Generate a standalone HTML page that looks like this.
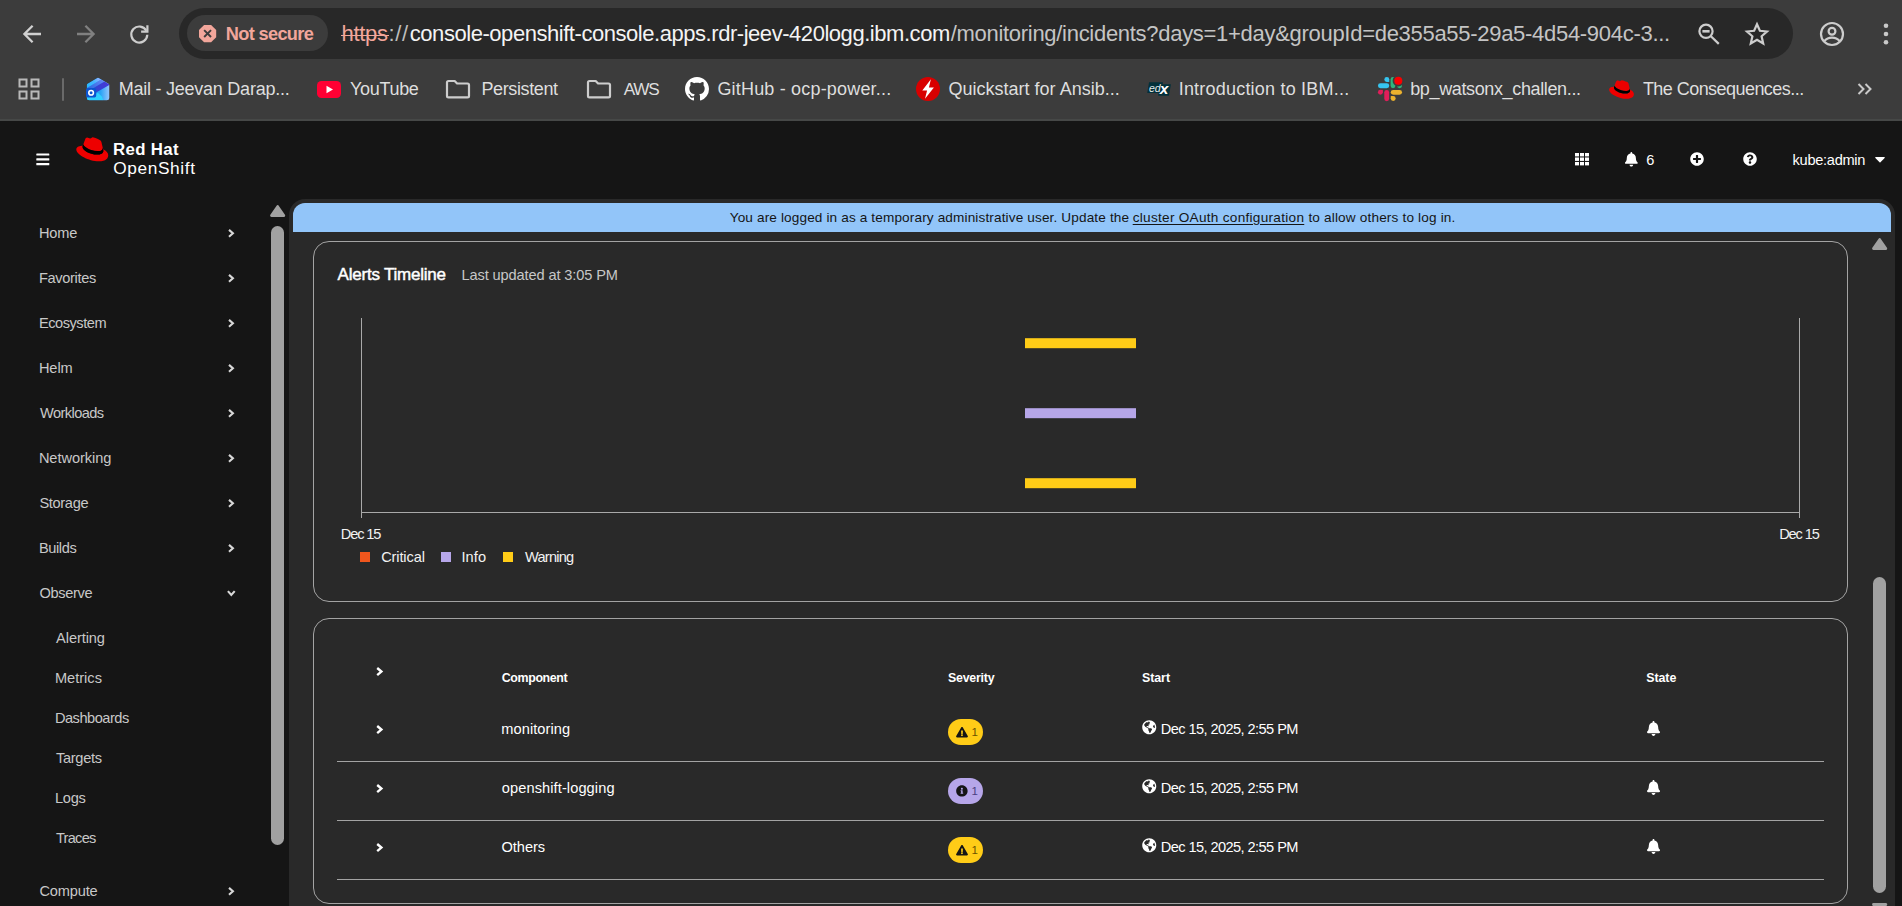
<!DOCTYPE html>
<html lang="en">
<head>
<meta charset="utf-8">
<title>Incidents · Red Hat OpenShift</title>
<style>
*{box-sizing:border-box;margin:0;padding:0}
html,body{width:1902px;height:906px;overflow:hidden;background:#151515}
body{position:relative;font-family:"Liberation Sans",sans-serif;color:#fff;-webkit-font-smoothing:antialiased}
.a{position:absolute}
.t{position:absolute;white-space:nowrap;line-height:1}
svg{position:absolute;overflow:visible}
/* chrome */
#chrome{left:0;top:0;width:1902px;height:121px;background:#3c3c3c;border-bottom:2px solid #464847}
#omni{left:179px;top:8px;width:1613.500px;height:51px;border-radius:25.500px;background:#282828}
#chip{left:186.800px;top:15px;width:141.700px;height:36px;border-radius:18px;background:#3c3c3c}
.bm{font-size:18px;color:#dedede;top:80px}
/* app */
#side{left:0;top:121px;width:1902px;height:785px;background:#151515}
#main{left:289px;top:199px;width:1606px;height:707px;background:#292929;border-radius:16px 16px 0 0}
#banner{left:4px;top:4px;width:1598px;height:29px;background:#92c5f9;border-radius:12px 12px 0 0}
.card{border:1px solid #a3a3a3;border-radius:16px}
.nav{font-size:14.6px;color:#c8c8c8;left:39px}
.sub{font-size:14.6px;color:#c8c8c8;left:55px}
.hr{left:337px;width:1487px;height:1px;background:#a3a3a3}
.th{font-size:12.4px;font-weight:bold;color:#fff;top:671px}
.td{font-size:14.6px;color:#fff}
/*FIT-START*/
#ns{letter-spacing:-0.661px!important;left:225.8px!important;top:24.6px!important}
#u1{letter-spacing:-0.325px!important;left:341.5px!important;top:22.6px!important}
#u2{letter-spacing:0.675px!important;left:388.4px!important;top:22.6px!important}
#u3{letter-spacing:-0.454px!important;left:409.8px!important;top:22.6px!important}
#u4{letter-spacing:-0.293px!important;left:950.7px!important;top:22.6px!important}
#b1{letter-spacing:-0.248px!important;left:118.8px!important;top:79.9px!important}
#b2{letter-spacing:-0.333px!important;left:350.1px!important;top:79.9px!important}
#b3{letter-spacing:-0.389px!important;left:481.5px!important;top:79.9px!important}
#b4{letter-spacing:-1.225px!important;left:623.7px!important;top:80.6px!important}
#b5{letter-spacing:0.185px!important;left:717.4px!important;top:79.9px!important}
#b6{letter-spacing:0.007px!important;left:948.5px!important;top:79.9px!important}
#b7{letter-spacing:0.210px!important;left:1178.7px!important;top:79.9px!important}
#b8{letter-spacing:-0.363px!important;left:1410.2px!important;top:79.9px!important}
#b9{letter-spacing:-0.547px!important;left:1642.9px!important;top:79.9px!important}
#rh1{letter-spacing:0.392px!important;left:112.9px!important;top:141.6px!important}
#rh2{letter-spacing:0.612px!important;left:113.2px!important;top:160.4px!important}
#m6{letter-spacing:0.000px!important;left:1646.2px!important;top:152.9px!important}
#ka{letter-spacing:-0.289px!important;left:1792.6px!important;top:152.9px!important}
#n1{letter-spacing:-0.167px!important;left:38.9px!important;top:225.8px!important}
#n2{letter-spacing:-0.331px!important;left:38.9px!important;top:270.8px!important}
#n3{letter-spacing:-0.456px!important;left:38.9px!important;top:315.8px!important}
#n4{letter-spacing:-0.083px!important;left:38.9px!important;top:360.8px!important}
#n5{letter-spacing:-0.581px!important;left:40.1px!important;top:405.8px!important}
#n6{letter-spacing:-0.061px!important;left:38.9px!important;top:450.8px!important}
#n7{letter-spacing:-0.325px!important;left:39.4px!important;top:495.8px!important}
#n8{letter-spacing:-0.380px!important;left:38.9px!important;top:540.8px!important}
#n9{letter-spacing:-0.308px!important;left:39.4px!important;top:585.8px!important}
#n10{letter-spacing:-0.086px!important;left:56.1px!important;top:631.0px!important}
#n11{letter-spacing:0.008px!important;left:54.9px!important;top:671.0px!important}
#n12{letter-spacing:-0.489px!important;left:54.9px!important;top:711.0px!important}
#n13{letter-spacing:-0.283px!important;left:55.9px!important;top:751.0px!important}
#n14{letter-spacing:-0.267px!important;left:55.0px!important;top:791.0px!important}
#n15{letter-spacing:-0.750px!important;left:56.0px!important;top:831.0px!important}
#n16{letter-spacing:-0.158px!important;left:39.4px!important;top:884.1px!important}
#bn1{letter-spacing:0.134px!important;left:729.7px!important;top:210.9px!important}
#bn2{letter-spacing:0.281px!important;left:1132.7px!important;top:210.9px!important}
#bn3{letter-spacing:0.166px!important;left:1308.4px!important;top:210.9px!important}
#at{letter-spacing:-0.218px!important;left:337.6px!important;top:266.1px!important}
#lu{letter-spacing:-0.118px!important;left:461.5px!important;top:267.7px!important}
#d1{letter-spacing:-1.140px!important;left:340.8px!important;top:526.9px!important}
#d2{letter-spacing:-1.120px!important;left:1779.2px!important;top:526.9px!important}
#l1{letter-spacing:-0.129px!important;left:381.2px!important;top:550.0px!important}
#l2{letter-spacing:0.067px!important;left:461.5px!important;top:550.0px!important}
#l3{letter-spacing:-0.767px!important;left:525.0px!important;top:550.0px!important}
#h1{letter-spacing:-0.381px!important;left:501.8px!important;top:671.8px!important}
#h2{letter-spacing:-0.207px!important;left:947.9px!important;top:671.8px!important}
#h3{letter-spacing:-0.025px!important;left:1141.9px!important;top:671.8px!important}
#h4{letter-spacing:-0.038px!important;left:1646.2px!important;top:671.8px!important}
#r1a{letter-spacing:0.072px!important;left:501.3px!important;top:722.3px!important}
#r2a{letter-spacing:0.097px!important;left:501.8px!important;top:781.3px!important}
#r3a{letter-spacing:-0.040px!important;left:501.5px!important;top:840.3px!important}
#r1c{letter-spacing:-0.575px!important;left:1160.7px!important;top:722.3px!important}
#r2c{letter-spacing:-0.575px!important;left:1160.7px!important;top:781.3px!important}
#r3c{letter-spacing:-0.575px!important;left:1160.7px!important;top:840.3px!important}
/*FIT-END*/
</style>
</head>
<body>
<!-- ============ browser chrome ============ -->
<div id="chrome" class="a"></div>
<div id="omni" class="a"></div>
<div id="chip" class="a"></div>
<!--CHROME-START-->
<!-- nav buttons -->
<svg class="a" style="left:20px;top:22px" width="24" height="24" viewBox="0 0 24 24" fill="none" stroke="#d0d0d0" stroke-width="2.300"><path d="M21 12H5M12.600 3.800 4.400 12l8.200 8.200"/></svg>
<svg class="a" style="left:74px;top:22px" width="24" height="24" viewBox="0 0 24 24" fill="none" stroke="#808080" stroke-width="2.300"><path d="M3 12h16M11.400 3.800l8.200 8.200-8.200 8.200"/></svg>
<svg class="a" style="left:127.300px;top:22px" width="24" height="24" viewBox="0 0 24 24" fill="none" stroke="#cdcdcd" stroke-width="2.200"><path d="M19.400 8.800A8 8 0 1 0 20.300 12.800"/><path d="M20.400 3.300v6.300h-6.300"/></svg>
<!-- not secure chip -->
<svg class="a" style="left:199.400px;top:25.400px" width="17.200" height="17.200" viewBox="0 0 18 18"><path d="M5.300 0h7.400L18 5.300v7.400L12.700 18H5.300L0 12.700V5.300z" fill="#f2a69b"/><path d="M5.400 5.400l7.200 7.200M12.600 5.400l-7.200 7.200" stroke="#3c3c3c" stroke-width="2"/></svg>
<div class="t" id="ns" style="left:226px;top:25px;font-size:18.2px;font-weight:bold;color:#f2a69b;letter-spacing:-0.35px">Not secure</div>
<div class="t" id="u1" style="left:341px;top:22px;font-size:22px;color:#f2a69b">https</div>
<div class="a" style="left:341.400px;top:34.500px;width:47.700px;height:1.500px;background:#f2a69b"></div>
<div class="t" id="u2" style="left:390px;top:22px;font-size:22px;color:#bdbdbd">://</div>
<div class="t" id="u3" style="left:410px;top:22px;font-size:22px;color:#f4f4f4">console-openshift-console.apps.rdr-jeev-420logg.ibm.com</div>
<div class="t" id="u4" style="left:950px;top:22px;font-size:22px;color:#c4c4c4">/monitoring/incidents?days=1+day&amp;groupId=de355a55-29a5-4d54-904c-3...</div>
<!-- omnibox right icons -->
<svg class="a" style="left:1697px;top:22px" width="24" height="24" viewBox="0 0 24 24" fill="none" stroke="#cdcdcd" stroke-width="2.200"><circle cx="9" cy="9.300" r="6.600"/><path d="M5.400 9.300h7.200" stroke-width="2.600"/><path d="M13.900 14.200l7.900 7.700"/></svg>
<svg class="a" style="left:1744px;top:21px" width="26" height="26" viewBox="0 0 26 26" fill="none" stroke="#cdcdcd" stroke-width="2.200" stroke-linejoin="miter"><path d="M13 3.2l2.9 6.6 7.1.7-5.4 4.8 1.6 7.1-6.2-3.7-6.2 3.7 1.6-7.1L3 10.500l7.1-.7z"/></svg>
<svg class="a" style="left:1819px;top:21px" width="26" height="26" viewBox="0 0 26 26" fill="none" stroke="#cdcdcd" stroke-width="2.200"><circle cx="13" cy="13" r="11"/><circle cx="13" cy="10.2" r="3.4"/><path d="M5.2 20.200c2-2.300 4.700-3.500 7.800-3.500s5.800 1.200 7.800 3.500"/></svg>
<svg class="a" style="left:1882px;top:22px" width="8" height="24" viewBox="0 0 8 24" fill="#c9c9c9"><circle cx="4" cy="3.700" r="2.300"/><circle cx="4" cy="12" r="2.300"/><circle cx="4" cy="20.300" r="2.300"/></svg>
<!-- bookmarks bar -->
<svg class="a" style="left:18px;top:78px" width="22" height="22" viewBox="0 0 22 22" fill="none" stroke="#b9b9b9" stroke-width="2"><rect x="1.500" y="1.500" width="7" height="7"/><rect x="13.500" y="1.500" width="7" height="7"/><rect x="1.500" y="13.500" width="7" height="7"/><rect x="13.500" y="13.500" width="7" height="7"/></svg>
<div class="a" style="left:62px;top:78px;width:2px;height:23px;background:#6a6a6a;border-radius:1px"></div>
<!-- mail icon -->
<svg class="a" style="left:75px;top:70px" width="50" height="40" viewBox="0 0 50 40"><defs><clipPath id="hs"><path d="M22.200 8.050a1.600 1.600 0 0 1 1.600 0L33.500 13.700a1.500 1.500 0 0 1 .75 1.300V27.900a2.400 2.400 0 0 1-2.400 2.400H14.300a2.400 2.400 0 0 1-2.400-2.400V15a1.500 1.500 0 0 1 .75-1.300z"/></clipPath><linearGradient id="g0" x1="0" x2="1" y1="0" y2="0"><stop offset="0" stop-color="#16a2f3"/><stop offset=".6" stop-color="#2aa4f6"/><stop offset="1" stop-color="#a9cbff"/></linearGradient><linearGradient id="g1" x1="0" x2="1" y1="1" y2="0"><stop offset="0" stop-color="#22bcff"/><stop offset=".55" stop-color="#45b4ff"/><stop offset="1" stop-color="#b0b0ff"/></linearGradient><linearGradient id="g2" x1="0" x2="1" y1="1" y2="0"><stop offset="0" stop-color="#1f66dc"/><stop offset="1" stop-color="#6a86f6"/></linearGradient><linearGradient id="g3" x1="0" x2="1" y1="1" y2="0"><stop offset="0" stop-color="#1f4fd0"/><stop offset="1" stop-color="#4a37d6"/></linearGradient></defs><g clip-path="url(#hs)"><rect x="10" y="6" width="26" height="26" fill="url(#g0)"/><path d="M11.930 14.130 22.970 7.730 26.240 9.580 11.930 17.890z" fill="url(#g1)"/><path d="M11.930 17.890 26.240 9.580 29.500 11.440 11.930 21.640z" fill="url(#g2)"/><path d="M11.930 21.640 29.500 11.440 34.230 14.130V15.020L22.970 21.550 11.930 27.960z" fill="url(#g3)"/><path d="M11 26.500 22.970 22.970 26.900 26.500 28.300 30.300H11.900z" fill="#2fd0ff"/></g><rect x="11" y="18.100" width="10.200" height="9.300" rx="1.700" fill="#0c54cf"/><circle cx="16.100" cy="22.750" r="2.300" fill="none" stroke="#fff" stroke-width="1.600"/></svg>
<div class="t bm" id="b1" style="left:119px">Mail - Jeevan Darap...</div>
<svg class="a" style="left:317px;top:81px" width="24" height="17" viewBox="0 0 24 17"><rect width="24" height="17" rx="4.500" fill="#ff0033"/><path d="M9.500 4.800v7.400l6.500-3.700z" fill="#fff"/></svg>
<div class="t bm" id="b2" style="left:350px">YouTube</div>
<svg class="a" style="left:446px;top:79.800px" width="24" height="18.300" viewBox="0 0 24 19" preserveAspectRatio="none" fill="none" stroke="#cdcdcd" stroke-width="2.200" stroke-linejoin="round"><path d="M1 2.500A1.500 1.500 0 0 1 2.500 1h6.200l2.400 2.600h10.400A1.500 1.500 0 0 1 23 5.100v11.400a1.500 1.500 0 0 1-1.500 1.500h-19A1.500 1.500 0 0 1 1 16.500z"/></svg>
<div class="t bm" id="b3" style="left:482px">Persistent</div>
<svg class="a" style="left:587px;top:79.800px" width="24" height="18.300" viewBox="0 0 24 19" preserveAspectRatio="none" fill="none" stroke="#cdcdcd" stroke-width="2.200" stroke-linejoin="round"><path d="M1 2.500A1.500 1.500 0 0 1 2.500 1h6.200l2.400 2.600h10.400A1.500 1.500 0 0 1 23 5.100v11.400a1.500 1.500 0 0 1-1.500 1.500h-19A1.500 1.500 0 0 1 1 16.500z"/></svg>
<div class="t bm" id="b4" style="left:623px;font-size:17.200px">AWS</div>
<!-- github -->
<svg class="a" style="left:685px;top:77px" width="24" height="24" viewBox="0 0 16 16"><path fill="#fff" d="M8 0C3.580 0 0 3.580 0 8c0 3.540 2.290 6.530 5.470 7.590.4.070.55-.17.55-.38 0-.19-.01-.82-.01-1.490-2.010.37-2.530-.49-2.690-.94-.09-.23-.48-.94-.82-1.130-.28-.15-.68-.52-.01-.53.63-.01 1.080.58 1.230.82.720 1.210 1.870.87 2.330.66.070-.52.280-.87.510-1.070-1.780-.2-3.640-.89-3.640-3.950 0-.87.310-1.590.82-2.150-.08-.2-.36-1.020.08-2.120 0 0 .67-.21 2.200.82.640-.18 1.320-.27 2-.27s1.360.09 2 .27c1.530-1.040 2.200-.82 2.200-.82.440 1.100.16 1.920.08 2.120.51.560.82 1.270.82 2.150 0 3.070-1.870 3.750-3.650 3.950.29.250.54.730.54 1.480 0 1.070-.01 1.930-.01 2.200 0 .21.150.46.550.38A8.010 8.010 0 0 0 16 8c0-4.420-3.580-8-8-8z"/></svg>
<div class="t bm" id="b5" style="left:718px">GitHub - ocp-power...</div>
<svg class="a" style="left:916px;top:77px" width="24" height="24" viewBox="0 0 24 24"><circle cx="12" cy="12" r="12" fill="#d80000"/><path d="M14.900 2.200 6.300 13.400h4.800L9 21.800 17.900 10.500h-5z" fill="#fff"/></svg>
<div class="t bm" id="b6" style="left:948px">Quickstart for Ansib...</div>
<!-- edx -->
<svg class="a" style="left:1147px;top:82px" width="24" height="14" viewBox="0 0 24 14"><path d="M2.050 .140H15.960L13.800 10.960H.280z" fill="#02303a"/><path d="M13.100 2.130H23.900L21.900 13.830H11.100z" fill="#02303a"/><text x="1.900" y="9.500" font-family="Liberation Sans,sans-serif" font-size="10.500" font-style="italic" fill="#e4ecec">ed</text><text x="12.700" y="12.300" font-family="Liberation Sans,sans-serif" font-size="15.500" font-weight="bold" font-style="italic" fill="#fff">x</text></svg>
<div class="t bm" id="b7" style="left:1180px">Introduction to IBM...</div>
<!-- slack -->
<svg class="a" style="left:1370px;top:70px" width="50" height="40" viewBox="0 0 50 40" fill="none" stroke-linecap="round" stroke-width="4.850"><path d="M10.400 15.700H16.800" stroke="#36c5f0"/><circle cx="16.800" cy="9.500" r="2.450" fill="#36c5f0"/><rect x="16.800" y="9.500" width="2.450" height="2.450" fill="#36c5f0"/><path d="M23 9.300V15.700" stroke="#2eb67d"/><circle cx="29.550" cy="15.700" r="2.450" fill="#2eb67d"/><rect x="27.100" y="13.250" width="2.450" height="2.450" fill="#2eb67d"/><circle cx="10.400" cy="22.300" r="2.450" fill="#e01e5a"/><rect x="10.400" y="19.850" width="2.450" height="2.450" fill="#e01e5a"/><path d="M16.700 22.300V28.700" stroke="#e01e5a"/><path d="M23.200 22.300H29.600" stroke="#ecb22e"/><circle cx="23.200" cy="28.500" r="2.450" fill="#ecb22e"/><rect x="20.750" y="26.050" width="2.450" height="2.450" fill="#ecb22e"/><circle cx="28.300" cy="10.800" r="5.700" fill="#3c3c3c"/><circle cx="28.300" cy="10.800" r="4" fill="#fa0000"/></svg>
<div class="t bm" id="b8" style="left:1411px">bp_watsonx_challen...</div>
<!-- red hat favicon -->
<svg class="a" style="left:1609px;top:80px" width="25" height="19" viewBox="0 0 192 146"><path d="M128 84c12.500 0 30.600-2.600 30.600-17.500a19.500 19.500 0 0 0-.3-3.400L150.900 31c-1.700-7.100-3.200-10.300-15.700-16.600C125.500 9.500 104.400 1.300 98.100 1.300c-5.800 0-7.500 7.500-14.400 7.500-6.700 0-11.600-5.600-17.900-5.600-6 0-9.900 4.100-12.900 12.500 0 0-8.400 23.700-9.500 27.200a6.200 6.200 0 0 0-.2 1.900C43.200 54 79.500 84 128 84" fill="#e00"/><path d="M160.500 72.700c1.700 8.200 1.700 9 1.700 10.100 0 14-15.700 21.800-36.400 21.800-46.800 0-87.700-27.400-87.700-45.500a18.500 18.500 0 0 1 1.500-7.300C22.800 52.600 1 55.600 1 74.800 1 106.300 75.600 145 134.600 145c45.300 0 56.700-20.500 56.700-36.600 0-12.700-11-27.100-30.800-35.700" fill="#e00"/><path d="M160.500 72.700c1.700 8.200 1.700 9 1.700 10.100 0 14-15.700 21.800-36.400 21.800-46.800 0-87.700-27.400-87.700-45.500a18.500 18.500 0 0 1 1.500-7.300l3.700-9.100a6.200 6.200 0 0 0-.2 1.900C43.200 54 79.500 84 128 84c12.500 0 30.600-2.600 30.600-17.500a19.500 19.500 0 0 0-.3-3.400z" fill="#000"/></svg>
<div class="t bm" id="b9" style="left:1642px">The Consequences...</div>
<svg class="a" style="left:1857px;top:83px" width="16" height="12" viewBox="0 0 16 12" fill="none" stroke="#c9c9c9" stroke-width="2"><path d="M1.500 1l5 5-5 5M8.500 1l5 5-5 5"/></svg>
<!--CHROME-END-->

<!-- ============ app ============ -->
<div id="side" class="a"></div>
<div id="main" class="a"><div id="banner" class="a"></div></div>
<!--MAST-START-->
<!-- hamburger -->
<svg class="a" style="left:35.500px;top:153.300px" width="14" height="13" viewBox="0 0 14 13" fill="#fff"><rect x=".3" y=".4" width="13" height="2.200" rx=".5"/><rect x=".3" y="5.200" width="13" height="2.200" rx=".5"/><rect x=".3" y="10" width="13" height="2.200" rx=".5"/></svg>
<!-- red hat logo -->
<svg class="a" style="left:76px;top:137px" width="32.500" height="24.500" viewBox="0 0 192 146"><path d="M128 84c12.500 0 30.600-2.600 30.600-17.500a19.500 19.500 0 0 0-.3-3.400L150.900 31c-1.700-7.100-3.200-10.300-15.700-16.600C125.500 9.500 104.400 1.300 98.100 1.300c-5.800 0-7.500 7.500-14.400 7.500-6.700 0-11.600-5.600-17.900-5.600-6 0-9.900 4.100-12.900 12.500 0 0-8.400 23.700-9.500 27.200a6.200 6.200 0 0 0-.2 1.900C43.200 54 79.500 84 128 84" fill="#e00"/><path d="M160.500 72.700c1.700 8.200 1.700 9 1.700 10.100 0 14-15.700 21.800-36.400 21.800-46.800 0-87.700-27.400-87.700-45.500a18.500 18.500 0 0 1 1.500-7.300C22.800 52.600 1 55.600 1 74.800 1 106.300 75.600 145 134.600 145c45.300 0 56.700-20.500 56.700-36.600 0-12.700-11-27.100-30.800-35.700" fill="#e00"/><path d="M160.500 72.700c1.700 8.200 1.700 9 1.700 10.100 0 14-15.700 21.800-36.400 21.800-46.800 0-87.700-27.400-87.700-45.500a18.500 18.500 0 0 1 1.500-7.300l3.700-9.100a6.200 6.200 0 0 0-.2 1.900C43.200 54 79.500 84 128 84c12.500 0 30.600-2.600 30.600-17.500a19.500 19.500 0 0 0-.3-3.400z" fill="#000"/></svg>
<div class="t" id="rh1" style="left:113px;top:141px;font-size:16.8px;font-weight:bold;color:#fff">Red Hat</div>
<div class="t" id="rh2" style="left:113px;top:159px;font-size:17.3px;color:#fff">OpenShift</div>
<!-- masthead tools -->
<svg class="a" style="left:1575px;top:152.700px" width="14" height="12.400" viewBox="0 0 14 13" preserveAspectRatio="none" fill="#fff"><rect x="0" y="0" width="4" height="3.600"/><rect x="5" y="0" width="4" height="3.600"/><rect x="10" y="0" width="4" height="3.600"/><rect x="0" y="4.700" width="4" height="3.600"/><rect x="5" y="4.700" width="4" height="3.600"/><rect x="10" y="4.700" width="4" height="3.600"/><rect x="0" y="9.400" width="4" height="3.600"/><rect x="5" y="9.400" width="4" height="3.600"/><rect x="10" y="9.400" width="4" height="3.600"/></svg>
<svg class="a" style="left:1624.500px;top:152px" width="12.700" height="14.500" viewBox="0 0 448 512"><path fill="#fff" d="M224 512c35.320 0 63.970-28.650 63.970-64H160.030c0 35.350 28.650 64 63.970 64zm215.390-149.710c-19.320-20.760-55.470-51.990-55.470-154.290 0-77.700-54.480-139.900-127.940-155.160V32c0-17.670-14.320-32-31.980-32s-31.980 14.330-31.980 32v20.840C118.560 68.100 64.080 130.300 64.080 208c0 102.300-36.150 133.530-55.470 154.290-6 6.450-8.660 14.160-8.610 21.710.11 16.400 12.980 32 32.100 32h383.800c19.120 0 32-15.600 32.100-32 .05-7.550-2.610-15.270-8.610-21.710z"/></svg>
<div class="t" id="m6" style="left:1646px;top:152.500px;font-size:14.6px">6</div>
<svg class="a" style="left:1690px;top:152px" width="14" height="14" viewBox="0 0 512 512"><path fill="#fff" d="M256 8C119 8 8 119 8 256s111 248 248 248 248-111 248-248S393 8 256 8zm144 276c0 6.600-5.400 12-12 12h-92v92c0 6.600-5.400 12-12 12h-56c-6.600 0-12-5.400-12-12v-92h-92c-6.600 0-12-5.400-12-12v-56c0-6.600 5.400-12 12-12h92v-92c0-6.600 5.400-12 12-12h56c6.600 0 12 5.400 12 12v92h92c6.600 0 12 5.400 12 12v56z"/></svg>
<svg class="a" style="left:1743px;top:152px" width="14" height="14" viewBox="0 0 512 512"><path fill="#fff" d="M504 256c0 136.997-111.043 248-248 248S8 392.997 8 256C8 119.083 119.043 8 256 8s248 111.083 248 248zM262.655 90c-54.497 0-89.255 22.957-116.549 63.758-3.536 5.286-2.353 12.415 2.715 16.258l34.699 26.310c5.205 3.947 12.621 3.008 16.665-2.122 17.864-22.658 30.113-35.797 57.303-35.797 20.429 0 45.698 13.148 45.698 32.958 0 14.976-12.363 22.667-32.534 33.976C247.128 238.528 216 254.941 216 296v4c0 6.627 5.373 12 12 12h56c6.627 0 12-5.373 12-12v-1.333c0-28.462 83.186-29.647 83.186-106.667 0-58.002-60.165-102-116.531-102zM256 338c-25.365 0-46 20.635-46 46 0 25.364 20.635 46 46 46s46-20.636 46-46c0-25.365-20.635-46-46-46z"/></svg>
<div class="t" id="ka" style="left:1793px;top:152.500px;font-size:14.6px">kube:admin</div>
<svg class="a" style="left:1875px;top:157px" width="10" height="5.500" viewBox="0 0 10 5.500"><path d="M.8 0h8.400a.6.600 0 0 1 .45 1L5.450 5.200a.6.600 0 0 1-.9 0L.35 1A.6.600 0 0 1 .8 0z" fill="#fff"/></svg>
<!--MAST-END-->
<!--NAV-START-->
<div class="t nav" id="n1" style="top:225.4px">Home</div>
<svg class="a" style="left:227.900px;top:228.8px" width="6.400" height="8.600" viewBox="0 0 6.400 8.600" fill="none" stroke="#d8d8d8" stroke-width="2.100"><path d="M1 .9l3.900 3.400-3.900 3.400"/></svg>
<div class="t nav" id="n2" style="top:270.4px">Favorites</div>
<svg class="a" style="left:227.900px;top:273.8px" width="6.400" height="8.600" viewBox="0 0 6.400 8.600" fill="none" stroke="#d8d8d8" stroke-width="2.100"><path d="M1 .9l3.900 3.400-3.900 3.400"/></svg>
<div class="t nav" id="n3" style="top:315.4px">Ecosystem</div>
<svg class="a" style="left:227.900px;top:318.8px" width="6.400" height="8.600" viewBox="0 0 6.400 8.600" fill="none" stroke="#d8d8d8" stroke-width="2.100"><path d="M1 .9l3.900 3.400-3.900 3.400"/></svg>
<div class="t nav" id="n4" style="top:360.4px">Helm</div>
<svg class="a" style="left:227.900px;top:363.8px" width="6.400" height="8.600" viewBox="0 0 6.400 8.600" fill="none" stroke="#d8d8d8" stroke-width="2.100"><path d="M1 .9l3.900 3.400-3.900 3.400"/></svg>
<div class="t nav" id="n5" style="top:405.4px">Workloads</div>
<svg class="a" style="left:227.900px;top:408.8px" width="6.400" height="8.600" viewBox="0 0 6.400 8.600" fill="none" stroke="#d8d8d8" stroke-width="2.100"><path d="M1 .9l3.900 3.400-3.900 3.400"/></svg>
<div class="t nav" id="n6" style="top:450.4px">Networking</div>
<svg class="a" style="left:227.900px;top:453.8px" width="6.400" height="8.600" viewBox="0 0 6.400 8.600" fill="none" stroke="#d8d8d8" stroke-width="2.100"><path d="M1 .9l3.900 3.400-3.900 3.400"/></svg>
<div class="t nav" id="n7" style="top:495.4px">Storage</div>
<svg class="a" style="left:227.900px;top:498.8px" width="6.400" height="8.600" viewBox="0 0 6.400 8.600" fill="none" stroke="#d8d8d8" stroke-width="2.100"><path d="M1 .9l3.900 3.400-3.900 3.400"/></svg>
<div class="t nav" id="n8" style="top:540.4px">Builds</div>
<svg class="a" style="left:227.900px;top:543.8px" width="6.400" height="8.600" viewBox="0 0 6.400 8.600" fill="none" stroke="#d8d8d8" stroke-width="2.100"><path d="M1 .9l3.900 3.400-3.900 3.400"/></svg>
<div class="t nav" id="n9" style="top:585.4px">Observe</div>
<svg class="a" style="left:227.300px;top:590.3px" width="8.600" height="6.600" viewBox="0 0 8.600 6.600" fill="none" stroke="#d8d8d8" stroke-width="2.100"><path d="M.9 1.100l3.400 3.900 3.400-3.900"/></svg>
<div class="t sub" id="n10" style="top:630.4px">Alerting</div>
<div class="t sub" id="n11" style="top:670.4px">Metrics</div>
<div class="t sub" id="n12" style="top:710.4px">Dashboards</div>
<div class="t sub" id="n13" style="top:750.4px">Targets</div>
<div class="t sub" id="n14" style="top:790.4px">Logs</div>
<div class="t sub" id="n15" style="top:830.4px">Traces</div>
<div class="t nav" id="n16" style="top:883.4px">Compute</div>
<svg class="a" style="left:227.900px;top:887.1999999999999px" width="6.400" height="8.600" viewBox="0 0 6.400 8.600" fill="none" stroke="#d8d8d8" stroke-width="2.100"><path d="M1 .9l3.900 3.400-3.900 3.400"/></svg>
<svg class="a" style="left:269.800px;top:204.900px" width="15.300" height="12" viewBox="0 0 15.300 12"><path d="M7.650 1.400 13.900 10.600H1.400z" fill="#a1a1a1" stroke="#a1a1a1" stroke-width="2.600" stroke-linejoin="round"/></svg>
<div class="a" style="left:271px;top:225.500px;width:13px;height:619px;border-radius:6.500px;background:#a1a1a1"></div>
<!--NAV-END-->
<!--CONTENT-START-->
<div class="t" id="bn1" style="left:729px;top:210px;font-size:13.6px;color:#151515">You are logged in as a temporary administrative user. Update the</div>
<div class="t" id="bn2" style="left:1132px;top:210px;font-size:13.6px;color:#151515;text-decoration:underline;text-underline-offset:2px">cluster OAuth configuration</div>
<div class="t" id="bn3" style="left:1308px;top:210px;font-size:13.6px;color:#151515">to allow others to log in.</div>
<div class="a card" style="left:313px;top:241px;width:1535px;height:361px"></div>
<div class="a card" style="left:313px;top:618px;width:1535px;height:286px"></div>
<div class="t" id="at" style="left:337px;top:265.500px;font-size:17px;color:#fff;-webkit-text-stroke:.45px #fff">Alerts Timeline</div>
<div class="t" id="lu" style="left:462px;top:267.500px;font-size:14.6px;color:#c7c7c7">Last updated at 3:05 PM</div>
<svg class="a" style="left:340px;top:310px" width="1490" height="215" viewBox="340 310 1490 215"><g stroke="#a9a9a9" stroke-width="1" fill="none"><path d="M361.500 318v200M361 512.500h1439M1799.500 318v200"/></g><rect x="1025" y="338.200" width="111" height="10" fill="#ffcc17"/><rect x="1025" y="408.200" width="111" height="10" fill="#b6a6e9"/><rect x="1025" y="478.200" width="111" height="10" fill="#ffcc17"/></svg>
<div class="t" id="d1" style="left:341.500px;top:526.500px;font-size:14.6px;color:#f2f2f2">Dec 15</div>
<div class="t" id="d2" style="left:1780px;top:526.500px;font-size:14.6px;color:#f2f2f2">Dec 15</div>
<div class="a" style="left:360px;top:552px;width:10px;height:10px;background:#f0561d"></div>
<div class="a" style="left:441px;top:552px;width:10px;height:10px;background:#b6a6e9"></div>
<div class="a" style="left:503px;top:552px;width:10px;height:10px;background:#ffcc17"></div>
<div class="t" id="l1" style="left:381.500px;top:549.700px;font-size:14.6px;color:#f2f2f2">Critical</div>
<div class="t" id="l2" style="left:462.500px;top:549.700px;font-size:14.6px;color:#f2f2f2">Info</div>
<div class="t" id="l3" style="left:524.500px;top:549.700px;font-size:14.6px;color:#f2f2f2">Warning</div>
<svg class="a" style="left:376.300px;top:667.4px" width="7" height="9.200" viewBox="0 0 7 9.200" fill="none" stroke="#fff" stroke-width="2.400"><path d="M1.200 1l4.200 3.600-4.200 3.600"/></svg>
<div class="t th" id="h1" style="left:502px">Component</div>
<div class="t th" id="h2" style="left:948px">Severity</div>
<div class="t th" id="h3" style="left:1142px">Start</div>
<div class="t th" id="h4" style="left:1646px">State</div>
<svg class="a" style="left:376.300px;top:724.8px" width="7" height="9.200" viewBox="0 0 7 9.200" fill="none" stroke="#fff" stroke-width="2.400"><path d="M1.200 1l4.200 3.600-4.200 3.600"/></svg>
<div class="t td" id="r1a" style="left:502px;top:721.6px">monitoring</div>
<div class="a" style="left:948px;top:719.0px;width:35px;height:26px;border-radius:13px;background:#ffcc17"></div>
<svg class="a" style="left:956px;top:726.7px" width="12" height="10.500" viewBox="0 0 576 512"><path fill="#151515" d="M569.517 440.013C587.975 472.007 564.806 512 527.940 512H48.054c-36.937 0-59.999-40.055-41.577-71.987L246.423 23.985c18.467-32.009 64.720-31.951 83.154 0l239.940 416.028zM288 354c-25.405 0-46 20.595-46 46s20.595 46 46 46 46-20.595 46-46-20.595-46-46-46zm-43.673-165.346l7.418 136c.347 6.364 5.609 11.346 11.982 11.346h48.546c6.373 0 11.635-4.982 11.982-11.346l7.418-136c.375-6.874-5.098-12.654-11.982-12.654h-63.383c-6.884 0-12.356 5.780-11.981 12.654z"/></svg>
<div class="t" id="r1b" style="left:971.500px;top:727.1px;font-size:11.500px;color:#6b5200">1</div>
<svg class="a" style="left:1142px;top:720.0px" width="14.500" height="14.500" viewBox="0 0 496 512"><path fill="#fff" d="M248 8C111.030 8 0 119.030 0 256s111.030 248 248 248 248-111.030 248-248S384.970 8 248 8zm82.290 357.600c-3.900 3.880-7.990 7.950-11.310 11.280-2.990 3-5.100 6.700-6.170 10.710-1.510 5.660-2.730 11.380-4.770 16.870l-17.390 46.850c-13.760 3-28 4.690-42.650 4.690v-27.380c1.690-12.620-7.640-36.260-22.630-51.250-6-6-9.370-14.140-9.370-22.630v-32.010c0-11.640-6.270-22.340-16.460-27.970-14.370-7.950-34.810-19.060-48.810-26.110-11.480-5.780-22.100-13.140-31.650-21.750l-.8-.72a114.792 114.792 0 0 1-18.060-20.740c-9.380-13.770-24.660-36.420-34.590-51.140 20.470-45.500 57.360-82.040 103.200-101.890l24.010 12.010C203.480 89.740 216 82.010 216 70.110v-11.300c7.990-1.290 16.120-2.110 24.390-2.420l28.300 28.300c6.250 6.250 6.250 16.380 0 22.630L264 112l-10.340 10.340c-3.120 3.120-3.120 8.190 0 11.310l4.690 4.690c3.120 3.120 3.120 8.190 0 11.310l-8 8a8.008 8.008 0 0 1-5.660 2.340h-8.990c-2.080 0-4.080.81-5.580 2.270l-9.920 9.650a8.008 8.008 0 0 0-1.580 9.310l15.590 31.190c2.660 5.320-1.210 11.580-7.150 11.580h-5.640c-1.930 0-3.790-.7-5.240-1.960l-9.280-8.060a16.017 16.017 0 0 0-15.550-3.100l-31.170 10.390a11.950 11.950 0 0 0-8.170 11.340c0 4.530 2.560 8.660 6.610 10.690l11.080 5.540c9.410 4.710 19.790 7.160 30.310 7.160s22.590 27.290 32 32h66.750c8.490 0 16.620 3.370 22.630 9.370l13.690 13.690a30.503 30.503 0 0 1 8.930 21.570 46.536 46.536 0 0 1-13.720 32.980zM417 274.250c-5.790-1.450-10.840-5-14.150-9.970l-17.980-26.970a23.970 23.970 0 0 1 0-26.620l19.590-29.380c2.320-3.470 5.500-6.290 9.240-8.150l12.980-6.490C440.200 193.590 448 223.870 448 256c0 8.670-.74 17.160-1.820 25.540L417 274.250z"/></svg>
<div class="t td" id="r1c" style="left:1161px;top:721.6px">Dec 15, 2025, 2:55 PM</div>
<svg class="a" style="left:1646.500px;top:720.9px" width="13" height="15" viewBox="0 0 448 512"><path fill="#fff" d="M224 512c35.320 0 63.970-28.650 63.970-64H160.030c0 35.350 28.650 64 63.970 64zm215.390-149.710c-19.320-20.760-55.470-51.990-55.470-154.290 0-77.700-54.480-139.900-127.940-155.160V32c0-17.670-14.320-32-31.980-32s-31.980 14.330-31.980 32v20.840C118.560 68.100 64.080 130.300 64.080 208c0 102.300-36.150 133.530-55.470 154.290-6 6.450-8.660 14.160-8.610 21.710.11 16.400 12.980 32 32.100 32h383.800c19.120 0 32-15.600 32.100-32 .05-7.550-2.610-15.270-8.610-21.710z"/></svg>
<div class="a hr" style="top:761px"></div>
<svg class="a" style="left:376.300px;top:783.8px" width="7" height="9.200" viewBox="0 0 7 9.200" fill="none" stroke="#fff" stroke-width="2.400"><path d="M1.200 1l4.200 3.600-4.200 3.600"/></svg>
<div class="t td" id="r2a" style="left:502px;top:780.6px">openshift-logging</div>
<div class="a" style="left:948px;top:778.0px;width:35px;height:26px;border-radius:13px;background:#b6a6e9"></div>
<svg class="a" style="left:956.100px;top:785.0px" width="11.800" height="11.800" viewBox="0 0 512 512"><path fill="#151515" d="M256 8C119.043 8 8 119.083 8 256c0 136.997 111.043 248 248 248s248-111.003 248-248C504 119.083 392.957 8 256 8zm0 110c23.196 0 42 18.804 42 42s-18.804 42-42 42-42-18.804-42-42 18.804-42 42-42zm56 254c0 6.627-5.373 12-12 12h-88c-6.627 0-12-5.373-12-12v-24c0-6.627 5.373-12 12-12h12v-64h-12c-6.627 0-12-5.373-12-12v-24c0-6.627 5.373-12 12-12h64c6.627 0 12 5.373 12 12v100h12c6.627 0 12 5.373 12 12v24z"/></svg>
<div class="t" id="r2b" style="left:971.500px;top:786.1px;font-size:11.500px;color:#4a3d80">1</div>
<svg class="a" style="left:1142px;top:779.0px" width="14.500" height="14.500" viewBox="0 0 496 512"><path fill="#fff" d="M248 8C111.030 8 0 119.030 0 256s111.030 248 248 248 248-111.030 248-248S384.970 8 248 8zm82.290 357.600c-3.900 3.880-7.990 7.950-11.310 11.280-2.990 3-5.100 6.700-6.170 10.710-1.510 5.660-2.730 11.380-4.770 16.870l-17.390 46.850c-13.760 3-28 4.690-42.650 4.690v-27.380c1.690-12.620-7.640-36.260-22.630-51.250-6-6-9.370-14.140-9.370-22.630v-32.010c0-11.640-6.270-22.340-16.460-27.970-14.370-7.950-34.810-19.060-48.810-26.110-11.480-5.780-22.100-13.140-31.650-21.750l-.8-.72a114.792 114.792 0 0 1-18.060-20.740c-9.380-13.770-24.660-36.420-34.590-51.140 20.470-45.500 57.360-82.040 103.200-101.890l24.010 12.010C203.480 89.740 216 82.010 216 70.110v-11.300c7.990-1.290 16.120-2.110 24.390-2.420l28.300 28.300c6.250 6.250 6.250 16.380 0 22.630L264 112l-10.340 10.340c-3.120 3.120-3.120 8.190 0 11.310l4.690 4.690c3.120 3.120 3.120 8.190 0 11.310l-8 8a8.008 8.008 0 0 1-5.660 2.340h-8.990c-2.080 0-4.080.81-5.580 2.270l-9.920 9.650a8.008 8.008 0 0 0-1.580 9.310l15.590 31.190c2.660 5.320-1.210 11.580-7.150 11.580h-5.640c-1.930 0-3.790-.7-5.240-1.960l-9.280-8.060a16.017 16.017 0 0 0-15.550-3.100l-31.170 10.390a11.950 11.950 0 0 0-8.170 11.340c0 4.530 2.560 8.660 6.610 10.690l11.080 5.540c9.410 4.710 19.790 7.160 30.310 7.160s22.590 27.290 32 32h66.750c8.490 0 16.620 3.370 22.630 9.370l13.690 13.690a30.503 30.503 0 0 1 8.930 21.570 46.536 46.536 0 0 1-13.720 32.980zM417 274.250c-5.790-1.450-10.840-5-14.150-9.970l-17.980-26.970a23.970 23.970 0 0 1 0-26.620l19.590-29.380c2.320-3.470 5.500-6.290 9.240-8.150l12.980-6.490C440.200 193.590 448 223.870 448 256c0 8.670-.74 17.160-1.820 25.540L417 274.250z"/></svg>
<div class="t td" id="r2c" style="left:1161px;top:780.6px">Dec 15, 2025, 2:55 PM</div>
<svg class="a" style="left:1646.500px;top:779.9px" width="13" height="15" viewBox="0 0 448 512"><path fill="#fff" d="M224 512c35.320 0 63.970-28.650 63.970-64H160.030c0 35.350 28.650 64 63.970 64zm215.390-149.710c-19.320-20.760-55.470-51.990-55.470-154.290 0-77.700-54.480-139.900-127.940-155.160V32c0-17.670-14.320-32-31.980-32s-31.980 14.330-31.980 32v20.840C118.560 68.100 64.080 130.300 64.080 208c0 102.300-36.150 133.530-55.470 154.290-6 6.450-8.660 14.160-8.610 21.710.11 16.400 12.980 32 32.100 32h383.800c19.120 0 32-15.600 32.100-32 .05-7.550-2.610-15.270-8.610-21.710z"/></svg>
<div class="a hr" style="top:820px"></div>
<svg class="a" style="left:376.300px;top:842.8px" width="7" height="9.200" viewBox="0 0 7 9.200" fill="none" stroke="#fff" stroke-width="2.400"><path d="M1.200 1l4.200 3.600-4.200 3.600"/></svg>
<div class="t td" id="r3a" style="left:502px;top:839.6px">Others</div>
<div class="a" style="left:948px;top:837.0px;width:35px;height:26px;border-radius:13px;background:#ffcc17"></div>
<svg class="a" style="left:956px;top:844.7px" width="12" height="10.500" viewBox="0 0 576 512"><path fill="#151515" d="M569.517 440.013C587.975 472.007 564.806 512 527.940 512H48.054c-36.937 0-59.999-40.055-41.577-71.987L246.423 23.985c18.467-32.009 64.720-31.951 83.154 0l239.940 416.028zM288 354c-25.405 0-46 20.595-46 46s20.595 46 46 46 46-20.595 46-46-20.595-46-46-46zm-43.673-165.346l7.418 136c.347 6.364 5.609 11.346 11.982 11.346h48.546c6.373 0 11.635-4.982 11.982-11.346l7.418-136c.375-6.874-5.098-12.654-11.982-12.654h-63.383c-6.884 0-12.356 5.780-11.981 12.654z"/></svg>
<div class="t" id="r3b" style="left:971.500px;top:845.1px;font-size:11.500px;color:#6b5200">1</div>
<svg class="a" style="left:1142px;top:838.0px" width="14.500" height="14.500" viewBox="0 0 496 512"><path fill="#fff" d="M248 8C111.030 8 0 119.030 0 256s111.030 248 248 248 248-111.030 248-248S384.970 8 248 8zm82.290 357.600c-3.900 3.880-7.990 7.950-11.310 11.280-2.990 3-5.100 6.700-6.170 10.710-1.510 5.660-2.730 11.380-4.770 16.870l-17.390 46.850c-13.760 3-28 4.690-42.650 4.690v-27.380c1.690-12.620-7.640-36.260-22.630-51.250-6-6-9.370-14.140-9.370-22.630v-32.010c0-11.640-6.270-22.340-16.460-27.970-14.370-7.950-34.810-19.060-48.810-26.110-11.480-5.780-22.100-13.140-31.650-21.750l-.8-.72a114.792 114.792 0 0 1-18.060-20.740c-9.380-13.770-24.660-36.420-34.590-51.140 20.470-45.500 57.360-82.040 103.200-101.890l24.010 12.010C203.480 89.740 216 82.010 216 70.110v-11.300c7.990-1.290 16.120-2.110 24.390-2.420l28.300 28.300c6.250 6.250 6.250 16.380 0 22.630L264 112l-10.340 10.340c-3.120 3.120-3.120 8.190 0 11.310l4.690 4.690c3.120 3.120 3.120 8.190 0 11.310l-8 8a8.008 8.008 0 0 1-5.660 2.340h-8.990c-2.080 0-4.080.81-5.580 2.270l-9.920 9.650a8.008 8.008 0 0 0-1.580 9.310l15.590 31.190c2.660 5.320-1.210 11.580-7.150 11.580h-5.640c-1.930 0-3.790-.7-5.240-1.960l-9.280-8.060a16.017 16.017 0 0 0-15.550-3.100l-31.170 10.390a11.950 11.950 0 0 0-8.170 11.340c0 4.530 2.560 8.660 6.610 10.690l11.080 5.540c9.410 4.710 19.790 7.160 30.310 7.160s22.590 27.290 32 32h66.750c8.490 0 16.620 3.370 22.630 9.370l13.690 13.690a30.503 30.503 0 0 1 8.930 21.570 46.536 46.536 0 0 1-13.720 32.980zM417 274.250c-5.790-1.450-10.840-5-14.150-9.970l-17.980-26.970a23.970 23.970 0 0 1 0-26.620l19.590-29.380c2.320-3.470 5.500-6.290 9.240-8.150l12.980-6.490C440.200 193.590 448 223.870 448 256c0 8.670-.74 17.160-1.820 25.540L417 274.250z"/></svg>
<div class="t td" id="r3c" style="left:1161px;top:839.6px">Dec 15, 2025, 2:55 PM</div>
<svg class="a" style="left:1646.500px;top:838.9px" width="13" height="15" viewBox="0 0 448 512"><path fill="#fff" d="M224 512c35.320 0 63.970-28.650 63.970-64H160.030c0 35.350 28.650 64 63.970 64zm215.390-149.710c-19.320-20.760-55.470-51.990-55.470-154.290 0-77.700-54.480-139.900-127.940-155.160V32c0-17.670-14.320-32-31.980-32s-31.980 14.330-31.980 32v20.840C118.560 68.100 64.080 130.300 64.080 208c0 102.300-36.150 133.530-55.470 154.290-6 6.450-8.660 14.160-8.610 21.710.11 16.400 12.980 32 32.100 32h383.800c19.120 0 32-15.600 32.100-32 .05-7.550-2.610-15.270-8.610-21.710z"/></svg>
<div class="a hr" style="top:879px"></div>
<svg class="a" style="left:1872px;top:237.800px" width="15.300" height="12" viewBox="0 0 15.300 12"><path d="M7.650 1.400 13.900 10.600H1.400z" fill="#a1a1a1" stroke="#a1a1a1" stroke-width="2.600" stroke-linejoin="round"/></svg>
<div class="a" style="left:1872.800px;top:576.500px;width:13.300px;height:316px;border-radius:6.650px;background:#a1a1a1"></div>
<svg class="a" style="left:1872px;top:903.400px" width="15.300" height="12" viewBox="0 0 15.300 12"><path d="M7.650 10.600 13.900 1.400H1.400z" fill="#a1a1a1" stroke="#a1a1a1" stroke-width="2.600" stroke-linejoin="round"/></svg>
<!--CONTENT-END-->
</body>
</html>
